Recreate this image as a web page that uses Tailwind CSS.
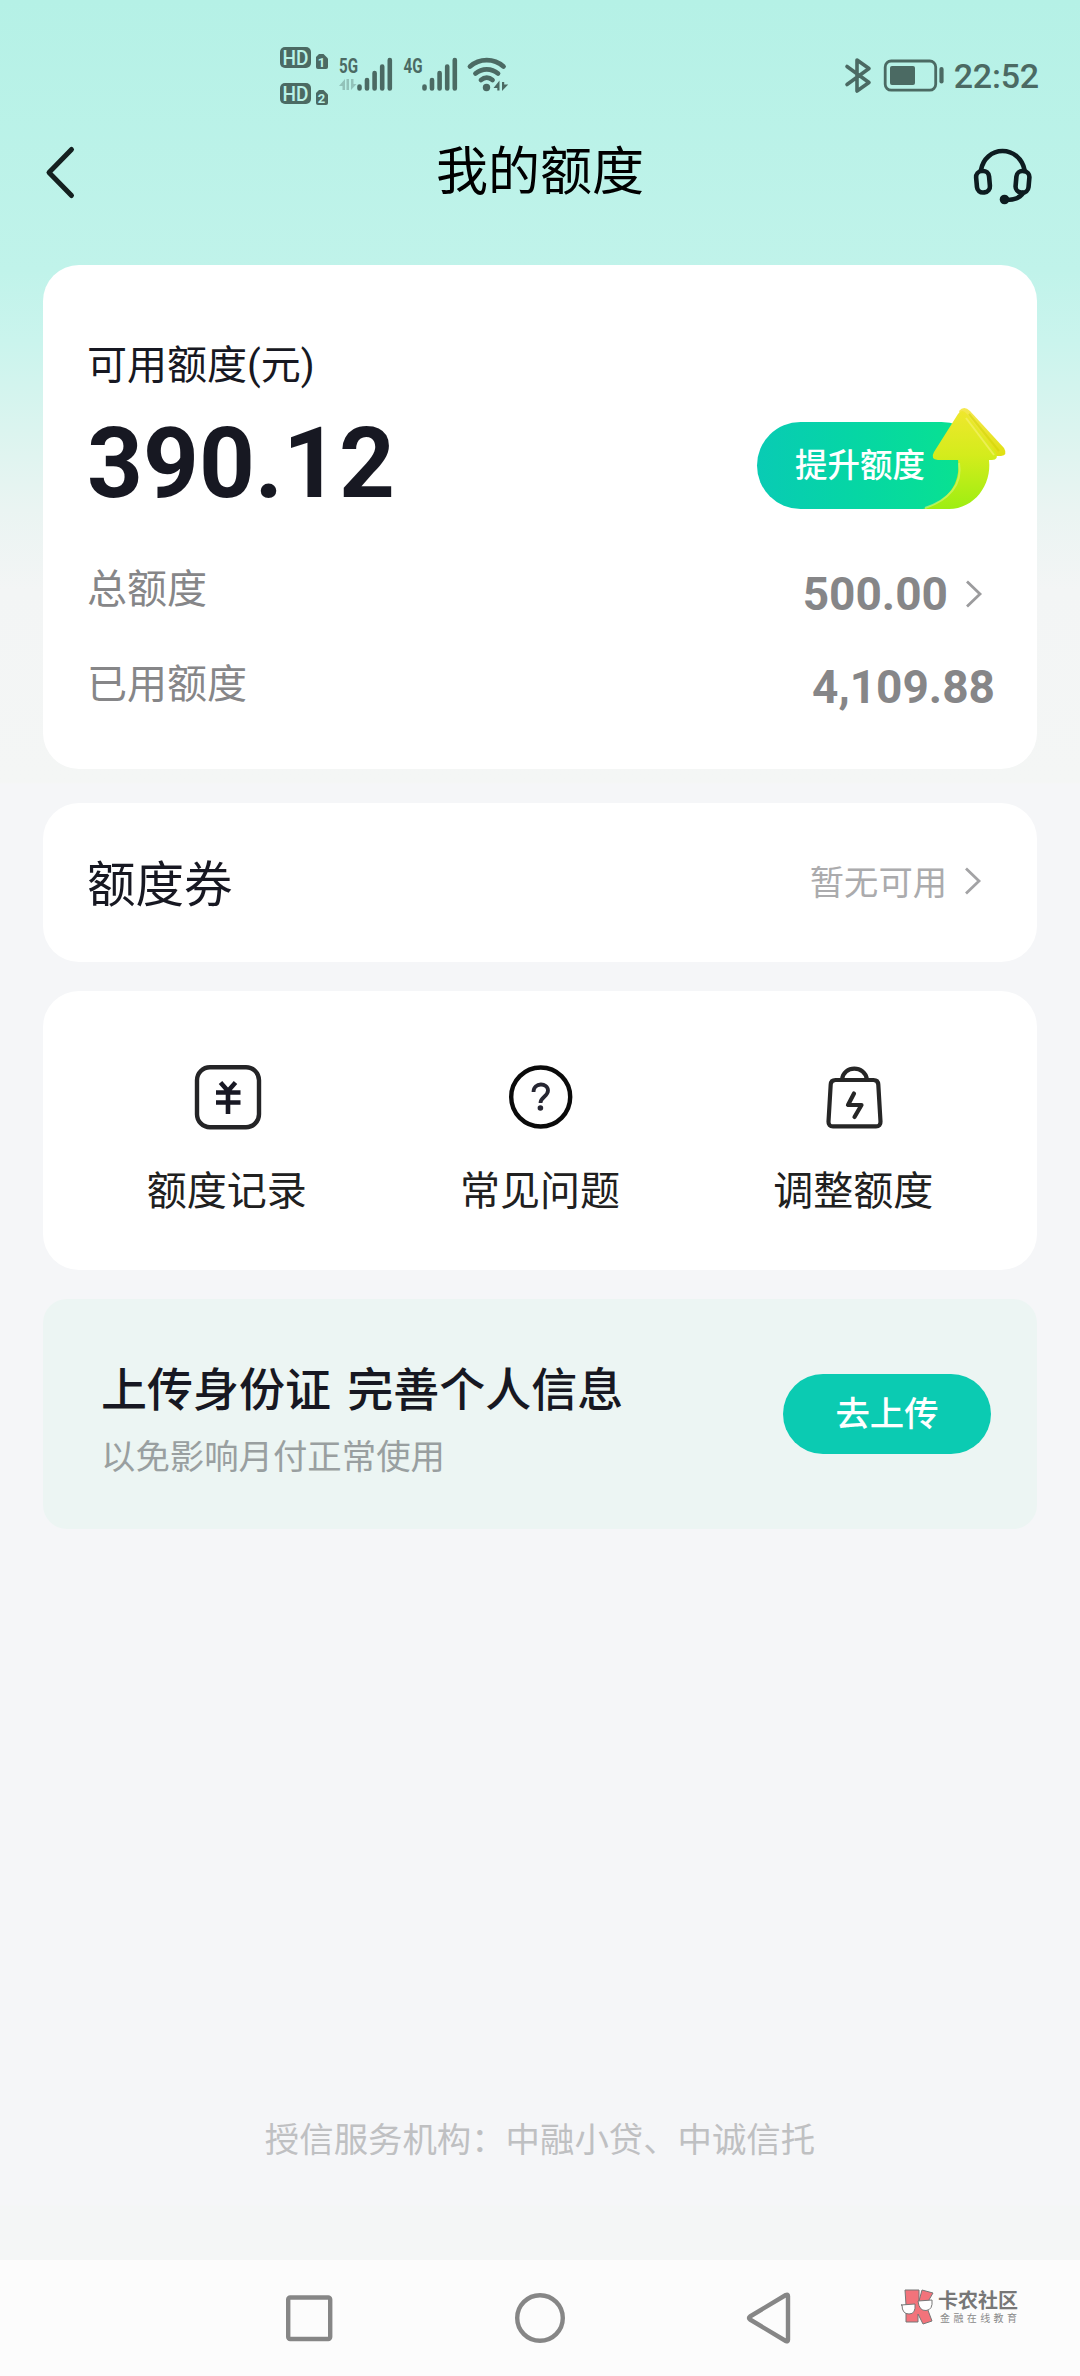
<!DOCTYPE html>
<html lang="zh-CN">
<head>
<meta charset="utf-8">
<title>我的额度</title>
<script src="https://cdn.jsdelivr.net/npm/@tailwindcss/browser@4"></script>
</head>
<body class="flex h-[2376px] w-[1080px] flex-col overflow-hidden bg-[#f5f6f8] font-['Noto_Sans_CJK_SC',sans-serif] text-[#171822]">
<div class="flex flex-1 flex-col bg-[linear-gradient(to_bottom,#b5f1e6_0px,#c0f3ea_270px,#caf4ed_340px,#dbf4ef_430px,#eaf4f2_510px,#f3f5f5_590px,#f4f6f5_782px,#f5f6f8_784px,#f5f6f8_2205px,#f4f6f6_2206px)]">
  <!-- status bar -->
  <header class="flex h-[124px] justify-between pl-[276px] pr-[41px] text-[#4b6a63]">
    <svg class="h-[124px] w-[240px]" viewBox="276 0 240 124" fill="currentColor">
      <g>
        <rect x="280" y="47" width="31" height="21" rx="5"/>
        <rect x="280" y="83" width="31" height="21" rx="5"/>
        <path d="M319 54h4.500l4.500 4.500V67a2 2 0 0 1-2 2h-8a2 2 0 0 1-2-2V57z"/>
        <path d="M319 90h4.500l4.500 4.500V103a2 2 0 0 1-2 2h-8a2 2 0 0 1-2-2V93z"/>
        <g fill="#b9f2e7" font-family="Roboto, sans-serif" text-anchor="middle">
          <text x="295.500" y="64.500" font-size="20" font-weight="500" textLength="26" lengthAdjust="spacingAndGlyphs">HD</text>
          <text x="295.500" y="100.500" font-size="20" font-weight="500" textLength="26" lengthAdjust="spacingAndGlyphs">HD</text>
          <text x="321.500" y="66.500" font-size="13" font-weight="700">1</text>
          <text x="321.500" y="102.500" font-size="13" font-weight="700">2</text>
        </g>
      </g>
      <g font-family="Roboto, sans-serif" font-size="20" font-weight="700">
        <text x="339" y="72.500" textLength="19" lengthAdjust="spacingAndGlyphs">5G</text>
        <text x="403.500" y="72.500" textLength="19" lengthAdjust="spacingAndGlyphs">4G</text>
      </g>
      <path d="M339 86l6-7v11h-2.500v-4zM346.500 79h2.500v11h-2.500zM351 79h2.500v5h3L351 90z" opacity=".35"/>
      <g stroke="currentColor" stroke-width="4.600" stroke-linecap="round">
        <path d="M359.500 86.500v2M367 80v8.500M374.600 73v15.500M382.200 66.500v22M389.800 60v28.500"/>
        <path d="M424.500 86.500v2M432 80v8.500M439.600 73v15.500M447.200 66.500v22M454.800 60v28.500"/>
      </g>
      <g fill="none" stroke="currentColor" stroke-width="4.800" stroke-linecap="round">
        <path d="M470 66.500c9.500-8.500 24-8.500 33.500 0M475.500 73.500c6.500-5.500 16-5.500 22.500 0M481 80c3.500-3 8-3 11.500 0"/>
      </g>
      <circle cx="486.500" cy="87.500" r="3.700"/>
      <path d="M493.500 88l6-7.500v10h-2.200V88zM502 82h2.200v2.500h4L502 91z"/>
    </svg>
    <div class="flex h-[124px] items-center">
      <svg class="h-[124px] w-[108px]" viewBox="840 0 108 124" fill="none" stroke="currentColor" stroke-width="3.600" stroke-linejoin="round" stroke-linecap="round">
        <path d="M846 66.500l22 16-12 8.500V60l12 8.500-22 16"/>
        <rect x="884.200" y="61" width="50.500" height="29.200" rx="6" stroke-width="2.800"/>
        <rect x="889" y="66" width="25" height="19" rx="2" fill="currentColor" stroke="none"/>
        <path d="M940.500 69v12.500" stroke-width="4.200"/>
      </svg>
      <span class="mt-[28px] ml-[5px] font-[Roboto] text-[34px] leading-[40px] font-medium tracking-[-0.2px]">22:52</span>
    </div>
  </header>
  <!-- title bar -->
  <div class="flex h-[92px] items-start justify-between px-[44px] text-black">
    <svg class="mt-[18px] h-[60px] w-[60px]" viewBox="44 142 60 60" fill="none" stroke="#14201f" stroke-width="5" stroke-linecap="round" stroke-linejoin="round"><path d="M71.500 149.500L49 172.500l22.500 23"/></svg>
    <h1 class="mt-[12px] text-[52px] leading-[64px]">我的额度</h1>
    <svg class="mt-[18px] h-[66px] w-[60px] overflow-visible" viewBox="976 142 60 66" fill="none" stroke="#0d1c20" stroke-width="4.600" stroke-linecap="round" stroke-linejoin="round">
      <path d="M981 170c2-11.500 11-19 21.500-19s20 7.500 22 19"/>
      <rect x="976.500" y="171" width="13" height="21.500" rx="6" transform="rotate(-5 983 181.500)"/>
      <rect x="1016" y="171" width="13" height="21.500" rx="6" transform="rotate(5 1022 181.500)"/>
      <path d="M1023 193c-3 5-8 7-17 7"/>
      <circle cx="1004.500" cy="199.500" r="4.800" fill="#0d1c20" stroke="none"/>
    </svg>
  </div>
  <main class="mt-[49px] flex flex-col px-[43px]">
    <!-- available credit -->
    <section class="h-[504px] rounded-[36px] bg-white pt-[71px] pr-[42px] pl-[44px]">
      <h2 class="h-[52px] text-[40px] leading-[52px]">可用额度<span class="font-[Roboto]">(</span>元<span class="font-[Roboto]">)</span></h2>
      <div class="mt-[26px] flex h-[100px] items-center justify-between">
        <strong class="font-[Roboto] text-[97.5px] leading-[100px] font-bold">390.12</strong>
        <div class="relative top-px mr-[6px] h-[87px] w-[232px]">
          <button class="flex h-[87px] w-[228px] items-center rounded-full bg-gradient-to-r from-[#09cbb4] to-[#0be48c] pb-[3px] pl-[38px] text-[32.5px] font-medium text-white">提升额度</button>
          <svg class="absolute -top-[17px] left-[166px] h-[106px] w-[86px]" viewBox="922 405 86 106">
            <defs>
              <linearGradient id="arrow" x1="0" y1="0" x2="0" y2="1"><stop offset="0" stop-color="#efe72d"/><stop offset=".45" stop-color="#d4ec1c"/><stop offset="1" stop-color="#9dee12"/></linearGradient>
              <linearGradient id="side" x1="0" y1="0" x2="0" y2="1"><stop offset="0" stop-color="#f5e850"/><stop offset="1" stop-color="#e0e010"/></linearGradient>
            </defs>
            <path d="M958 411q5-6 11 0l34 37q4 7-3 8h-22z" fill="url(#side)"/>
            <path d="M957 414q4-6 9 0l29 39q3 7-4 7h-3c3 25-15 49-40 49h-26c24-8 38-24 35-49h-20q-8-1-4-8z" fill="url(#arrow)"/>
            <path d="M968 414l30 37" fill="none" stroke="#cdd200" stroke-width="2" opacity=".5"/>
            <path d="M965 418l28 37" fill="none" stroke="#f3f16a" stroke-width="2" opacity=".7"/>
            <path d="M924 508c24-8 38-24 34-45" fill="none" stroke="#d3f56a" stroke-width="2" opacity=".7"/>
          </svg>
        </div>
      </div>
      <div class="mt-[44px] flex h-[56px] items-center justify-between text-[#868688]">
        <span class="text-[40px] leading-[56px]">总额度</span>
        <span class="flex items-center pt-[15px] pr-[10px]"><b class="font-[Roboto] text-[46px] leading-[46px]">500.00</b>
          <svg class="ml-[15px] h-[32px] w-[22px]" viewBox="0 0 22 32" fill="none" stroke="#9b9b9d" stroke-width="2.800"><path d="M4 3.500L17 16 4 28.500"/></svg>
        </span>
      </div>
      <div class="mt-[39px] flex h-[56px] items-center justify-between text-[#868688]">
        <span class="text-[40px] leading-[56px]">已用额度</span>
        <b class="pt-[11px] font-[Roboto] text-[46px] leading-[46px]">4,109.88</b>
      </div>
    </section>
    <!-- coupons -->
    <section class="mt-[34px] flex h-[159px] items-center justify-between rounded-[36px] bg-white pr-[53px] pb-[3px] pl-[44px]">
      <h2 class="text-[48.5px] leading-[60px]">额度券</h2>
      <span class="flex items-center text-[34.3px] leading-[40px] text-[#ababad]"><span class="pb-[3px]">暂无可用</span>
        <svg class="ml-[15px] h-[32px] w-[22px]" viewBox="0 0 22 32" fill="none" stroke="#a3a3a5" stroke-width="2.800"><path d="M4 3.500L17 16 4 28.500"/></svg>
      </span>
    </section>
    <!-- shortcuts -->
    <nav class="mt-[29px] grid h-[279px] grid-cols-3 rounded-[36px] bg-white px-[27px] pt-[71px] text-[40px] leading-[56px] text-[#202020]">
      <a class="flex flex-col items-center gap-[28px]">
        <svg class="h-[70px] w-[70px]" viewBox="0 0 70 70" fill="none" stroke="#242426">
          <rect x="5" y="5.200" width="62" height="60" rx="13" stroke-width="4.400"/>
          <path d="M28.500 20.500l7.500 8.500 7.500-8.500M36 29v23M24 30.500h24.500M24 40.500h24.500" stroke="#181824" stroke-width="4.600"/>
        </svg>
        <span>额度记录</span>
      </a>
      <a class="flex flex-col items-center gap-[28px]">
        <svg class="h-[70px] w-[70px]" viewBox="0 0 70 70" fill="none" stroke="#0a0a0a">
          <circle cx="35.700" cy="35" r="29.500" stroke-width="4.400"/>
          <path d="M28.500 30c0-10 14.500-9.500 14.500-1.500 0 6-7.500 6.500-7.500 12.500" stroke="#262632" stroke-width="3.800"/>
          <circle cx="35.400" cy="46" r="2.800" fill="#262632" stroke="none"/>
        </svg>
        <span>常见问题</span>
      </a>
      <a class="flex flex-col items-center gap-[28px]">
        <svg class="h-[70px] w-[70px]" viewBox="0 0 70 70" fill="none" stroke="#262626" stroke-width="4.200" stroke-linejoin="round" stroke-linecap="round">
          <path d="M17.500 18h38q4.500 0 4.800 4.500l2.200 37q.2 4.800-4.500 4.800h-43q-4.700 0-4.500-4.800l2.200-37q.3-4.500 4.800-4.500z"/>
          <path d="M24 17.500c1.500-14.500 23-14.500 25 0"/>
          <path d="M36 31.500l-6 11.500h13.500L36.500 55"/>
        </svg>
        <span>调整额度</span>
      </a>
    </nav>
    <!-- ID upload prompt -->
    <section class="mt-[29px] flex h-[230px] items-center justify-between rounded-[24px] bg-[#ecf5f3] pr-[46px] pl-[58px]">
      <div class="pt-[6px]">
        <h3 class="text-[46px] leading-[60px] font-medium [word-spacing:6px]">上传身份证 完善个人信息</h3>
        <p class="mt-[13px] text-[34.4px] leading-[50px] text-[#999fa0]">以免影响月付正常使用</p>
      </div>
      <button class="flex h-[80px] w-[208px] items-center justify-center rounded-full bg-[#0bcbb2] pb-[4px] text-[34.4px] font-medium text-white">去上传</button>
    </section>
  </main>
  <footer class="mt-auto mb-[98px] text-center text-[34.4px] leading-[50px] text-[#bfc0c2]">授信服务机构：中融小贷、中诚信托</footer>
</div>
<!-- system navigation -->
<div class="relative h-[116px] bg-[#fcfcfc]">
  <svg class="h-[116px] w-[1080px]" viewBox="0 2260 1080 116" fill="none" stroke="#868686" stroke-width="4.400" stroke-linejoin="round">
    <rect x="288.200" y="2297.500" width="42" height="41.500" rx="2"/>
    <circle cx="540" cy="2318" r="22.800"/>
    <path d="M788 2296q0-2-2.200-1L750 2316.500q-2 1.500 0 3L785.800 2341q2.200 1 2.200-1z"/>
  </svg>
  <div class="absolute top-[28px] left-[900px] flex items-start gap-[4px]">
    <svg class="h-[38px] w-[34px]" viewBox="0 0 34 38" stroke="#777" stroke-width="1">
      <path d="M5 2h14v11l3-11 11 3-7 12 6 16-9 3-5-10v8H6V17z" fill="#f2737b"/>
      <path d="M1 17l14-1q1 10-6 10T2 17zM18 13l14-1q1 10-6 10.500T18 13z" fill="#fff"/>
    </svg>
    <div class="flex flex-col whitespace-nowrap">
      <span class="text-[20px] leading-[23px] font-bold text-[#777]">卡农社区</span>
      <span class="pl-[2px] text-[10px] leading-[13px] tracking-[3.400px] text-[#8a8a8a]">金融在线教育</span>
    </div>
  </div>
</div>
</body>
</html>
